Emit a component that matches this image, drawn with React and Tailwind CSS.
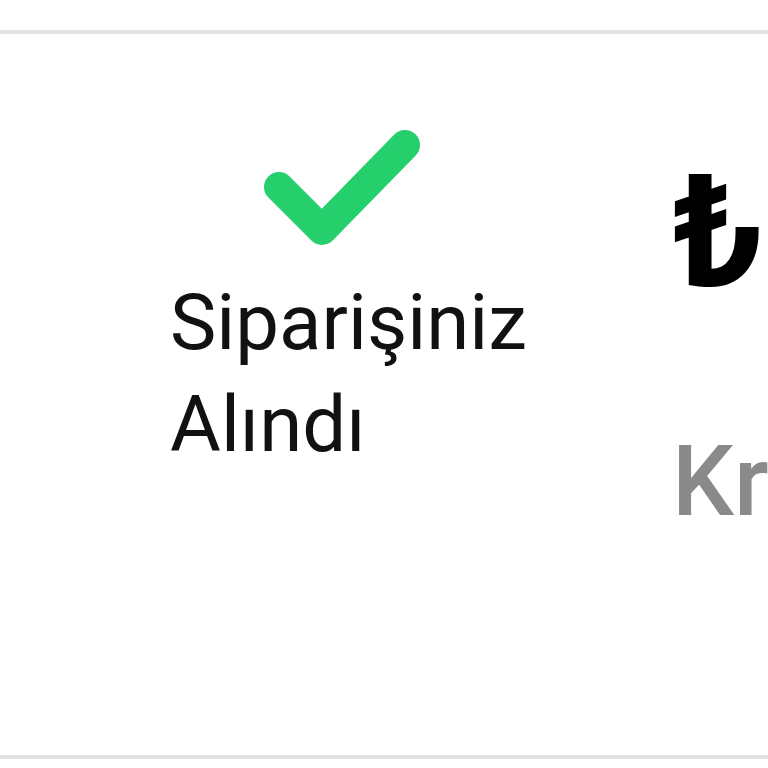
import React from 'react';

const CheckIcon = () => (
    <svg width="170" height="135" viewBox="0 0 170 135" className="block">
        <polyline
            points="16,67 59,110 142,25"
            fill="none"
            stroke="#25cf6c"
            strokeWidth="30"
            strokeLinecap="round"
            strokeLinejoin="round"
        />
    </svg>
);

const App = () => {
    return (
        <div className="w-[768px] h-[768px] overflow-hidden bg-white pt-[30px]" style={{ fontFamily: 'Roboto, "Noto Sans", sans-serif' }}>
            <div className="h-[729px] border-y-[4px] border-[#e2e2e2] flex overflow-hidden">
                {/* left: status */}
                <div className="w-[672px] shrink-0 pl-[170px] pt-[86px] flex flex-col items-start">
                    <div className="ml-[93px]">
                        <CheckIcon />
                    </div>
                    <div className="mt-[17px] w-[380px] text-[78px] leading-[102px] text-[#111]">
                        Siparişiniz Alındı
                    </div>
                </div>

                {/* right: amount + payment */}
                <div className="flex flex-col whitespace-nowrap pt-[120px]">
                    <div className="text-[156px] leading-none font-bold text-black">₺249,90</div>
                    <div className="mt-[123px] text-[98px] leading-none font-medium text-[#8a8a8a]">Kredi Kartı</div>
                </div>
            </div>
        </div>
    );
};

export default App;
